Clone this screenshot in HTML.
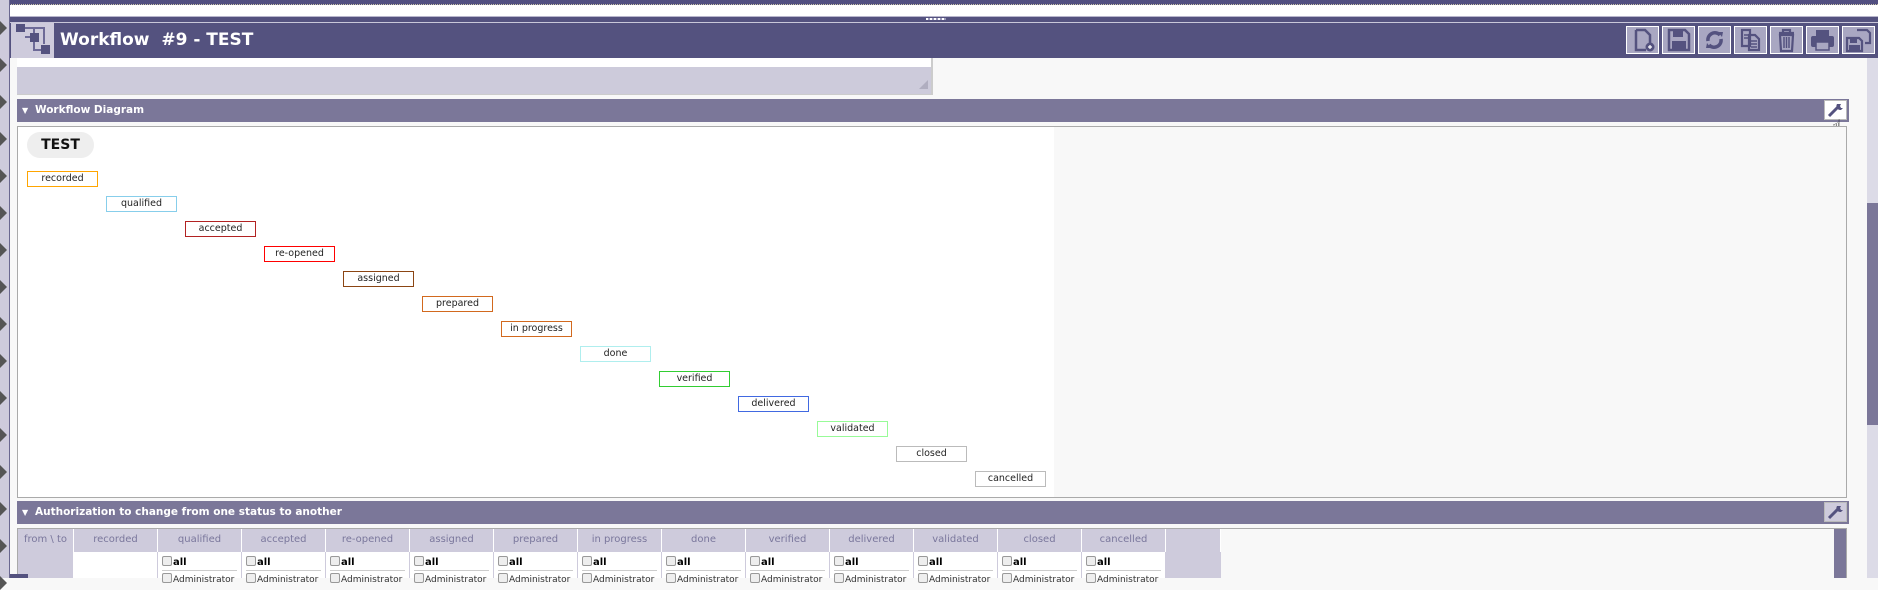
<!DOCTYPE html>
<html><head><meta charset="utf-8"><style>
*{margin:0;padding:0;box-sizing:border-box}
body{width:1878px;height:578px;overflow:hidden;background:#f8f8f8;position:relative;font-family:"DejaVu Sans","Liberation Sans",sans-serif}
.a{position:absolute}
.st{position:absolute;width:71px;height:16px;border:1px solid;background:#fff;font-size:9.5px;text-align:center;line-height:14px;color:#222}
.btn{position:absolute;top:26px;width:33px;height:28px;background:#a9a7c2;border:1px solid #fff}
.hdr{position:absolute;left:17px;width:1832px;height:23px;background:#7b7799;color:#fff;font-weight:bold;font-size:10.5px;line-height:23px;padding-left:18px}
.th{position:absolute;top:529px;height:23px;background:#cecbdc;border-right:1px solid #fff;color:#7a779c;font-size:10px;text-align:center;line-height:22px}
.td{position:absolute;top:552px;height:26px;background:#fff;border-right:1px solid #cecbdc;font-size:10px}
.cb{display:inline-block;width:10px;height:10px;border:1px solid #999;background:#eee;border-radius:2px;vertical-align:-1px;margin-right:1px}
</style></head><body>
<div class="a" style="left:0;top:0;width:1878px;height:5px;background:#524f80;border-bottom:1px dotted #c8c4a8"></div>
<div class="a" style="left:0;top:5px;width:1878px;height:11px;background:#fff"></div>
<div class="a" style="left:0;top:16px;width:1878px;height:1px;background:#b8b6cc"></div>
<div class="a" style="left:0;top:17px;width:1878px;height:5px;background:#54527f"></div>
<div class="a" style="left:926px;top:18px;width:20px;height:2px;background:repeating-linear-gradient(90deg,#fff 0 2px,#9a98b8 2px 4px)"></div>
<div class="a" style="left:0;top:22px;width:1878px;height:1px;background:#c9c7d9"></div>
<div class="a" style="left:0;top:23px;width:1878px;height:35px;background:#54527f"></div>
<div class="a" style="left:0;top:0;width:10px;height:578px;background:#cecbdc;border-right:1px solid #6a6790"></div>
<div id="arr"></div>
<div class="a" style="left:11px;top:23px;width:43px;height:35px;background:#cecbdc"></div>
<svg class="a" style="left:14px;top:22px" width="38" height="34" viewBox="0 0 38 34">
<g fill="#54527f"><rect x="2" y="2" width="9" height="8"/><rect x="16" y="11" width="9" height="9"/><rect x="27" y="23" width="9" height="9"/></g>
<g stroke="#6d6a97" stroke-width="2" fill="none"><path d="M11 6H30V22"/><path d="M20 6V11"/><path d="M20 20V28H27"/><path d="M16 15H11"/></g></svg>
<div class="a" style="left:60px;top:30px;color:#fff;font-weight:bold;font-size:17px;white-space:pre">Workflow  #9 - TEST</div>
<div class="btn" style="left:1626px"><svg width="31" height="26" viewBox="0 0 31 26"><path d="M9 3h9l5 5v9M9 3v20h10" stroke="#54527f" stroke-width="2.5" fill="none"/><circle cx="23" cy="20" r="4.5" fill="#54527f"/><path d="M23 18v4M21 20h4" stroke="#fff" stroke-width="1.2"/></svg></div>
<div class="btn" style="left:1662px"><svg width="31" height="26" viewBox="0 0 31 26"><path d="M6 3h16l4 4v16H6z" fill="none" stroke="#54527f" stroke-width="2.5"/><rect x="10" y="4" width="10" height="6" fill="#54527f"/><rect x="9" y="14" width="14" height="8" fill="#54527f"/></svg></div>
<div class="btn" style="left:1698px"><svg width="31" height="26" viewBox="0 0 31 26"><path d="M9 14a7 7 0 0 1 12-6M22 12a7 7 0 0 1-12 6" fill="none" stroke="#54527f" stroke-width="3.5"/><path d="M19 5l5 0-1 5z M12 21l-5 0 1-5z" fill="#54527f"/></svg></div>
<div class="btn" style="left:1734px"><svg width="31" height="26" viewBox="0 0 31 26"><path d="M7 3h8v16H7z M14 8h6l4 4v11H14z" fill="#a9a7c2" stroke="#54527f" stroke-width="2.2"/><path d="M9 8h4M9 11h4M16 14h6M16 17h6M16 20h6" stroke="#54527f" stroke-width="1.5"/></svg></div>
<div class="btn" style="left:1770px"><svg width="31" height="26" viewBox="0 0 31 26"><path d="M8 6h15M12 6V3h7v3M9 8l1 16h11l1-16z" fill="none" stroke="#54527f" stroke-width="2.2"/><path d="M13 10v11M15.5 10v11M18 10v11" stroke="#54527f" stroke-width="1.5"/></svg></div>
<div class="btn" style="left:1806px"><svg width="31" height="26" viewBox="0 0 31 26"><rect x="9" y="3" width="13" height="6" fill="#54527f"/><rect x="4" y="9" width="23" height="11" rx="2" fill="#54527f"/><rect x="9" y="15" width="13" height="8" fill="#a9a7c2" stroke="#54527f" stroke-width="1.5"/></svg></div>
<div class="btn" style="left:1842px"><svg width="31" height="26" viewBox="0 0 31 26"><path d="M14 3h10l3 3v10h-5" fill="none" stroke="#54527f" stroke-width="2.2"/><path d="M4 11h12l3 3v10H4z" fill="none" stroke="#54527f" stroke-width="2.2"/><rect x="7" y="12" width="7" height="4" fill="#54527f"/><rect x="6" y="18" width="11" height="5" fill="#54527f"/></svg></div>
<div class="a" style="left:17px;top:58px;width:916px;height:9px;background:#fff;border-right:2px solid #ccc"></div>
<div class="a" style="left:17px;top:67px;width:916px;height:28px;background:#cdcbdb;border-right:2px solid #ccc;border-bottom:1px solid #ccc"></div>
<div class="a" style="left:919px;top:80px;width:0;height:0;border-left:9px solid transparent;border-bottom:9px solid #b0aec0"></div>
<div class="hdr" style="top:99px"><span class="a" style="left:5px;top:0;font-size:8px">▼</span>Workflow Diagram</div>
<div class="a" style="left:1824px;top:100px;width:23px;height:20px;background:#fff;border:1px solid #bbb"></div>
<svg class="a" style="left:1827px;top:102px" width="17" height="16" viewBox="0 0 17 16"><path d="M2 14L11 5" stroke="#54527f" stroke-width="3"/><path d="M10 2a4 4 0 0 0 4 6l2-2-2 0-1-2 1-2z" fill="#54527f"/></svg>
<div class="a" style="left:1832px;top:116px;font-size:16px;color:#222">☝</div>
<div class="a" style="left:17px;top:126px;width:1830px;height:372px;background:#f8f8f8;border:1px solid #aaa"></div>
<div class="a" style="left:18px;top:127px;width:1036px;height:370px;background:#fff"></div>
<div class="a" style="left:27px;top:132px;width:67px;height:26px;border-radius:13px;background:#eee;font-weight:bold;font-size:14px;text-align:center;line-height:26px;color:#111">TEST</div>
<div id="states"></div>
<div class="hdr" style="top:501px"><span class="a" style="left:5px;top:0;font-size:8px">▼</span>Authorization to change from one status to another</div>
<div class="a" style="left:1824px;top:502px;width:23px;height:20px;background:#cecbdc;border:1px solid #bbb"></div>
<svg class="a" style="left:1827px;top:504px" width="17" height="16" viewBox="0 0 17 16"><path d="M2 14L11 5" stroke="#54527f" stroke-width="3"/><path d="M10 2a4 4 0 0 0 4 6l2-2-2 0-1-2 1-2z" fill="#54527f"/></svg>
<div class="a" style="left:17px;top:528px;width:1830px;height:50px;background:#f8f8f8;border:1px solid #aaa;border-bottom:none"></div>
<div class="a" style="left:1834px;top:529px;width:12px;height:49px;background:#7b7799"></div>
<div id="tbl"></div>
<div class="a" style="left:10px;top:574px;width:18px;height:4px;background:#54527f"></div>
<div class="a" style="left:1867px;top:58px;width:11px;height:520px;background:#dcdbe7"></div>
<div class="a" style="left:1867px;top:203px;width:11px;height:222px;background:#7b7799"></div>
<script>
var h='';for(var i=0;i<16;i++){var y=21+i*37;h+='<div class="a" style="left:0;top:'+y+'px;width:0;height:0;border-top:7px solid transparent;border-bottom:7px solid transparent;border-left:7px solid #555"></div>';}
document.getElementById('arr').innerHTML=h;
var S=[['recorded','#ffa500'],['qualified','#87ceeb'],['accepted','#b22222'],['re-opened','#ff0000'],['assigned','#8b4513'],['prepared','#d2691e'],['in progress','#d2691e'],['done','#afeeee'],['verified','#32cd32'],['delivered','#4169e1'],['validated','#98fb98'],['closed','#bbbbbb'],['cancelled','#bbbbbb']];
h='';S.forEach(function(s,i){h+='<div class="st" style="left:'+(27+i*79)+'px;top:'+(171+i*25)+'px;border-color:'+s[1]+'">'+s[0]+'</div>';});
document.getElementById('states').innerHTML=h;
h='<div class="th" style="left:18px;width:56px">from \\ to</div><div class="td" style="left:18px;width:56px;background:#cecbdc;border-right:1px solid #fff"></div>';
S.forEach(function(s,i){var x=74+i*84;h+='<div class="th" style="left:'+x+'px;width:84px">'+s[0]+'</div>';
h+='<div class="td" style="left:'+x+'px;width:84px">'+(i==0?'':'<div style="padding:4px 0 0 4px;font-weight:bold;font-size:10px;line-height:11px"><span class="cb"></span>all</div><div style="margin:2px 4px 0 4px;border-top:1px solid #ccc;padding-top:2px;font-size:9px;color:#333;white-space:nowrap;overflow:hidden"><span class="cb"></span>Administrator</div>')+'</div>';});
h+='<div class="th" style="left:1166px;width:55px"></div><div class="td" style="left:1166px;width:55px;background:#cecbdc;border-right:none"></div>';
document.getElementById('tbl').innerHTML=h;
</script>
</body></html>
